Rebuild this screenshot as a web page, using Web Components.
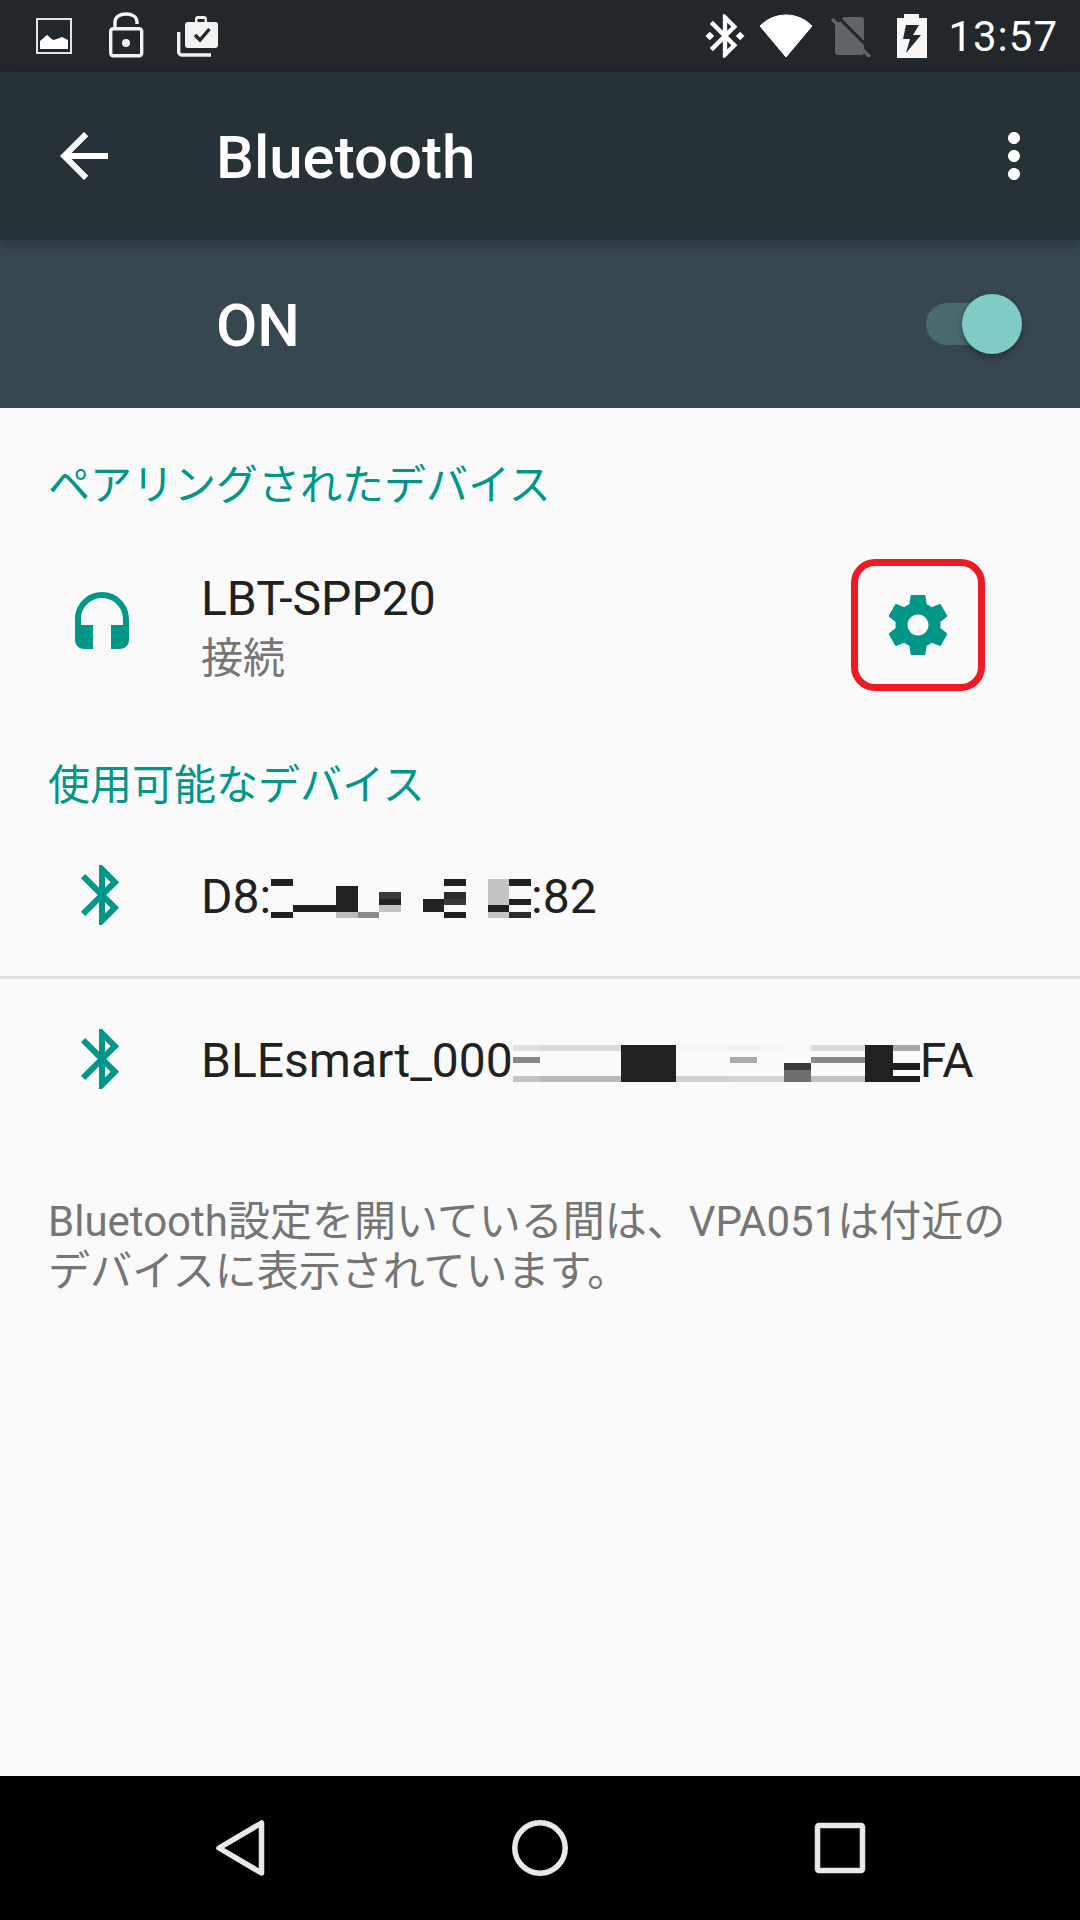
<!DOCTYPE html>
<html lang="ja">
<head>
<meta charset="utf-8">
<title>Bluetooth</title>
<style>
  html, body { margin: 0; padding: 0; }
  body {
    width: 1080px;
    height: 1920px;
    display: flex;
    flex-direction: column;
    overflow: hidden;
    background: #fafafa;
    font-family: Roboto, "Noto Sans CJK JP", sans-serif;
  }
</style>
</head>
<body>
  <status-bar></status-bar>
  <app-toolbar>Bluetooth</app-toolbar>
  <master-switch>ON</master-switch>
  <settings-list>
    <section-title style="--top:54px;--bottom:18px">ペアリングされたデバイス</section-title>
    <device-row icon="headset" height="194">
      LBT-SPP20
      <span slot="summary">接続</span>
      <gear-button slot="action"></gear-button>
    </device-row>
    <section-title style="--top:40px;--bottom:4px">使用可能なデバイス</section-title>
    <device-row icon="bluetooth" height="162" divider>
      D8:<pixel-block width="260" height="39" rows="
        d . . . . . . . d . l d /
        . . . d . . . . . . l . /
        . . . d . 3 . . 2 . l . /
        . . . d . d . d 3 . l d /
        . d d d . l . d . . d . /
        d . . b 8 . . . d . l 2"></pixel-block>:82
    </device-row>
    <device-row icon="bluetooth" height="160">
      BLEsmart_000<pixel-block width="407" height="37" rows="
        e0 da da da d d f6 f6 f2 f6 f8 da da d a8 /
        . . . . d d . . . . . . . d . /
        88 . . . d d . . aa . . 88 88 d . /
        . . . . d d . . . . 3a . . d d /
        . . . . d d . . . . 6e . . d ff /
        c4 b8 b8 b8 d d d0 d0 d4 d4 6e c2 c2 d d"></pixel-block>FA
    </device-row>
    <foot-note>Bluetooth設定を開いている間は、VPA051は付近のデバイスに表示されています。</foot-note>
  </settings-list>
  <nav-bar></nav-bar>

<script>
// material paths, all on a 24 unit box
const ICONS = {
  back: "M20 11H7.83l5.59-5.59L12 4l-8 8 8 8 1.41-1.41L7.83 13H20v-2z",
  more: "M12 8c1.1 0 2-.9 2-2s-.9-2-2-2-2 .9-2 2 .9 2 2 2zm0 2c-1.1 0-2 .9-2 2s.9 2 2 2 2-.9 2-2-.9-2-2-2zm0 6c-1.1 0-2 .9-2 2s.9 2 2 2 2-.9 2-2-.9-2-2-2z",
  headset: "M12 1c-4.97 0-9 4.03-9 9v7c0 1.66 1.34 3 3 3h3v-8H5v-2c0-3.87 3.13-7 7-7s7 3.13 7 7v2h-4v8h3c1.66 0 3-1.34 3-3v-7c0-4.97-4.03-9-9-9z",
  bluetooth: "M17.71 7.71L12 2h-1v7.59L6.41 5 5 6.41 10.59 12 5 17.59 6.41 19 11 14.41V22h1l5.71-5.71-4.3-4.29 4.3-4.29zM13 5.83l1.88 1.88L13 9.59V5.83zm1.88 10.46L13 18.17v-3.76l1.88 1.88z",
  gear: "M19.43 12.98c.04-.32.07-.64.07-.98s-.03-.66-.07-.98l2.11-1.65c.19-.15.24-.42.12-.64l-2-3.46c-.12-.22-.39-.3-.61-.22l-2.49 1c-.52-.4-1.08-.73-1.69-.98l-.38-2.65C14.46 2.18 14.25 2 14 2h-4c-.25 0-.46.18-.49.42l-.38 2.65c-.61.25-1.17.59-1.69.98l-2.49-1c-.23-.09-.49 0-.61.22l-2 3.46c-.13.22-.07.49.12.64l2.11 1.65c-.04.32-.07.65-.07.98s.03.66.07.98l-2.11 1.65c-.19.15-.24.42-.12.64l2 3.46c.12.22.39.3.61.22l2.49-1c.52.4 1.08.73 1.69.98l.38 2.65c.03.24.24.42.49.42h4c.25 0 .46-.18.49-.42l.38-2.65c.61-.25 1.17-.59 1.69-.98l2.49 1c.23.09.49 0 .61-.22l2-3.46c.12-.22.07-.49-.12-.64l-2.11-1.65zM12 15.5c-1.93 0-3.5-1.57-3.5-3.5s1.57-3.5 3.5-3.5 3.5 1.57 3.5 3.5-1.57 3.5-3.5 3.5z"
};

function icon(name, color) {
  return `<svg width="72" height="72" viewBox="0 0 24 24" style="display:block;flex:none"><path fill="${color}" d="${ICONS[name]}"/></svg>`;
}

class StatusBar extends HTMLElement {
  constructor() {
    super();
    this.attachShadow({ mode: "open" });
    this.shadowRoot.innerHTML = `
      <style>
        :host {
          display: flex;
          flex: none;
          height: 72px;
          align-items: center;
          background: #21272b;
          color: #fff;
          font: 400 42px Roboto, sans-serif;
        }
        svg { display: block; flex: none; }
        .time { margin-left: 21px; letter-spacing: 1px; }
        .spacer { flex: 1; }
      </style>
      <svg width="36" height="36" viewBox="0 0 36 36" style="margin-left:36px">
        <rect x="1" y="1" width="34" height="34" fill="none" stroke="#e4e4e4" stroke-width="2"/>
        <path fill="#fff" d="M4 31v-8l7-6 6 5 4-1 5-2 6 3v9z"/>
      </svg>
      <svg width="36" height="46" viewBox="0 0 36 46" style="margin-left:36px;margin-top:-3px">
        <path fill="none" stroke="#f2f2f2" stroke-width="3.4" d="M7 16V10C7 5 11.5 2 18 2S29 5 29 10v2"/>
        <rect x="2.7" y="16.7" width="31" height="27" rx="2.5" fill="none" stroke="#f2f2f2" stroke-width="3.4"/>
        <circle cx="18" cy="31" r="4" fill="#f2f2f2"/>
      </svg>
      <svg width="45" height="42" viewBox="0 0 45 42" style="margin-left:32px">
        <path fill="none" stroke="#f2f2f2" stroke-width="3.4" d="M2.7 17V37a3 3 0 0 0 3 3H35"/>
        <path fill="#f2f2f2" fill-rule="evenodd" d="M19 4a3 3 0 0 1 3-3h6a3 3 0 0 1 3 3v3h8a3 3 0 0 1 3 3v20a3 3 0 0 1-3 3H12a3 3 0 0 1-3-3V10a3 3 0 0 1 3-3h7zm2.5 0v3h7V4z"/>
        <path fill="none" stroke="#21272b" stroke-width="3.4" d="M19 20l5 5 9.5-11"/>
      </svg>
      <span class="spacer"></span>
      <svg width="52" height="52" viewBox="0 0 24 24"><path fill="#fff" d="M7 12l-2-2-2 2 2 2 2-2zm10.71-4.29L12 2h-1v7.59L6.41 5 5 6.41 10.59 12 5 17.59 6.41 19 11 14.41V22h1l5.71-5.71-4.3-4.29 4.3-4.29zM13 5.83l1.88 1.88L13 9.59V5.83zm1.88 10.46L13 18.17v-3.76l1.88 1.88zM19 10l-2 2 2 2 2-2-2-2z"/></svg>
      <svg width="54" height="44" viewBox="0 0 54 44" style="margin-left:8px">
        <path fill="#fff" stroke="#fff" stroke-linejoin="round" d="M1 12A36 36 0 0 1 53 12L27 43Z"/>
      </svg>
      <svg width="42" height="42" viewBox="0 0 42 42" style="margin-left:18px">
        <path fill="#5f6468" d="M13 2H30a3 3 0 0 1 3 3V37a3 3 0 0 1-3 3H7a3 3 0 0 1-3-3V11z"/>
        <path fill="none" stroke="#21272b" stroke-width="3" d="M5 0L41 36"/>
        <path fill="none" stroke="#5f6468" stroke-width="3.5" d="M1 4L39 42"/>
      </svg>
      <svg width="30" height="44" viewBox="0 0 30 44" style="margin-left:24px">
        <path fill="#f6f6f6" d="M7 0H22V4H30V44H0V4H7z"/>
        <path fill="#21272b" d="M9 11H22L16 21H24L9 39 13 25H6z"/>
      </svg>
      <span class="time">13:57</span>
      <span style="width:22px"></span>
    `;
  }
}

const toolbarTemplate = document.createElement("template");
toolbarTemplate.innerHTML = `
  <style>
    :host {
      display: flex;
      flex: none;
      position: relative;
      z-index: 1;
      height: 168px;
      align-items: center;
      padding: 0 30px 0 48px;
      background: #263238;
      color: #fff;
      font: 500 60px Roboto, sans-serif;
      box-shadow: 0 3px 12px rgba(0, 0, 0, .28);
    }
    .title { flex: 1; margin-left: 96px; padding-top: 2px; }
  </style>
  <span id="back"></span>
  <span class="title"><slot></slot></span>
  <span id="more"></span>
`;

class AppToolbar extends HTMLElement {
  constructor() {
    super();
    this.attachShadow({ mode: "open" });
    this.shadowRoot.appendChild(toolbarTemplate.content.cloneNode(true));
    this.shadowRoot.querySelector("#back").innerHTML = icon("back", "#fff");
    this.shadowRoot.querySelector("#more").innerHTML = icon("more", "#fff");
  }
}

const switchTemplate = document.createElement("template");
switchTemplate.innerHTML = `
  <style>
    :host {
      display: flex;
      flex: none;
      height: 168px;
      align-items: center;
      padding: 0 58px 0 216px;
      background: #37474f;
      color: #fff;
      font: 500 60px Roboto, sans-serif;
    }
    .label { flex: 1; padding-top: 2px; }
    .track {
      width: 74px;
      height: 42px;
      border-radius: 21px;
      background: #4a6a6c;
    }
    .thumb {
      width: 60px;
      height: 60px;
      margin-left: -38px;
      border-radius: 50%;
      background: #80cbc4;
      box-shadow: 0 3px 6px rgba(0, 0, 0, .35);
    }
  </style>
  <span class="label"><slot></slot></span>
  <span class="track"></span>
  <span class="thumb"></span>
`;

class MasterSwitch extends HTMLElement {
  constructor() {
    super();
    this.attachShadow({ mode: "open" });
    this.shadowRoot.appendChild(switchTemplate.content.cloneNode(true));
  }
}

class SettingsList extends HTMLElement {
  constructor() {
    super();
    this.attachShadow({ mode: "open" });
    this.shadowRoot.innerHTML = `
      <style>
        :host { display: block; flex: 1; background: #fafafa; }
      </style>
      <slot></slot>
    `;
  }
}

class SectionTitle extends HTMLElement {
  constructor() {
    super();
    this.attachShadow({ mode: "open" });
    this.shadowRoot.innerHTML = `
      <style>
        :host {
          display: block;
          padding: var(--top, 40px) 48px var(--bottom, 16px);
          color: #009688;
          font: 400 42px/48px Roboto, "Noto Sans CJK JP", sans-serif;
        }
      </style>
      <slot></slot>
    `;
  }
}

class DeviceRow extends HTMLElement {
  constructor() {
    super();
    this.attachShadow({ mode: "open" });
    const height = this.getAttribute("height") || 160;
    const border = this.hasAttribute("divider") ? "border-bottom: 3px solid #e0e0e0;" : "";
    this.shadowRoot.innerHTML = `
      <style>
        :host {
          display: flex;
          height: ${height}px;
          align-items: center;
          padding-left: 66px;
          ${border}
        }
        .text { flex: 1; margin-left: 63px; padding-top: 7px; }
        .title {
          color: #212121;
          font: 400 48px/60px Roboto, "Noto Sans CJK JP", sans-serif;
          white-space: nowrap;
        }
        .summary {
          color: #757575;
          font: 400 42px/60px Roboto, "Noto Sans CJK JP", sans-serif;
        }
      </style>
      ${icon(this.getAttribute("icon"), "#009688")}
      <div class="text">
        <div class="title"><slot></slot></div>
        <div class="summary"><slot name="summary"></slot></div>
      </div>
      <slot name="action"></slot>
    `;
    // rows without a summary must not reserve its line
    if (!this.querySelector("[slot=summary]")) {
      this.shadowRoot.querySelector(".summary").style.display = "none";
      this.shadowRoot.querySelector(".text").style.paddingTop = "4px";
    }
  }
}

class GearButton extends HTMLElement {
  constructor() {
    super();
    this.attachShadow({ mode: "open" });
    this.shadowRoot.innerHTML = `
      <style>
        :host {
          display: flex;
          box-sizing: border-box;
          width: 134px;
          height: 132px;
          margin-right: 95px;
          align-items: center;
          justify-content: center;
          border: 7px solid #ed1c24;
          border-radius: 24px;
        }
      </style>
      ${icon("gear", "#009688")}
    `;
  }
}

// the blurred out parts of the device names
class PixelBlock extends HTMLElement {
  constructor() {
    super();
    this.attachShadow({ mode: "open" });
    const rows = this.getAttribute("rows").trim().split("/").map(r => r.trim().split(/\s+/));
    const named = { d: "#212121", l: "#c4c4c4", b: "#bcbcbc", 2: "#2c2c2c", 3: "#3a3a3a", 8: "#8c8c8c" };
    const cells = rows.flat().map(c => {
      if (c === ".") return "<i></i>";
      const color = named[c] || "#" + c + c + c;
      return `<i style="background:${color}"></i>`;
    }).join("");
    this.shadowRoot.innerHTML = `
      <style>
        :host {
          display: inline-block;
          overflow: hidden; /* baseline becomes the bottom edge */
          width: ${this.getAttribute("width")}px;
          height: ${this.getAttribute("height")}px;
          vertical-align: -5px;
        }
        .grid {
          display: grid;
          height: 100%;
          grid-template-columns: repeat(${rows[0].length}, 1fr);
          grid-template-rows: repeat(${rows.length}, 1fr);
        }
      </style>
      <div class="grid">${cells}</div>
    `;
  }
}

class FootNote extends HTMLElement {
  constructor() {
    super();
    this.attachShadow({ mode: "open" });
    this.shadowRoot.innerHTML = `
      <style>
        :host {
          display: block;
          padding: 58px 48px 0;
          color: #757575;
          font: 400 42px/50px Roboto, "Noto Sans CJK JP", sans-serif;
        }
      </style>
      <slot></slot>
    `;
  }
}

class NavBar extends HTMLElement {
  constructor() {
    super();
    this.attachShadow({ mode: "open" });
    this.shadowRoot.innerHTML = `
      <style>
        :host {
          display: flex;
          flex: none;
          height: 144px;
          gap: 228px;
          align-items: center;
          justify-content: center;
          background: #000;
        }
        svg { display: block; fill: none; stroke: #e8e8e8; stroke-width: 5.5; stroke-linejoin: round; }
      </style>
      <svg width="72" height="72" viewBox="0 0 72 72"><path d="M15 36L57.5 11V61z"/></svg>
      <svg width="72" height="72" viewBox="0 0 72 72"><circle cx="36" cy="36" r="25.2"/></svg>
      <svg width="72" height="72" viewBox="0 0 72 72"><rect x="13.5" y="13.5" width="45" height="45" rx="1.5"/></svg>
    `;
  }
}

customElements.define("status-bar", StatusBar);
customElements.define("app-toolbar", AppToolbar);
customElements.define("master-switch", MasterSwitch);
customElements.define("settings-list", SettingsList);
customElements.define("section-title", SectionTitle);
customElements.define("device-row", DeviceRow);
customElements.define("gear-button", GearButton);
customElements.define("pixel-block", PixelBlock);
customElements.define("foot-note", FootNote);
customElements.define("nav-bar", NavBar);
</script>
</body>
</html>
